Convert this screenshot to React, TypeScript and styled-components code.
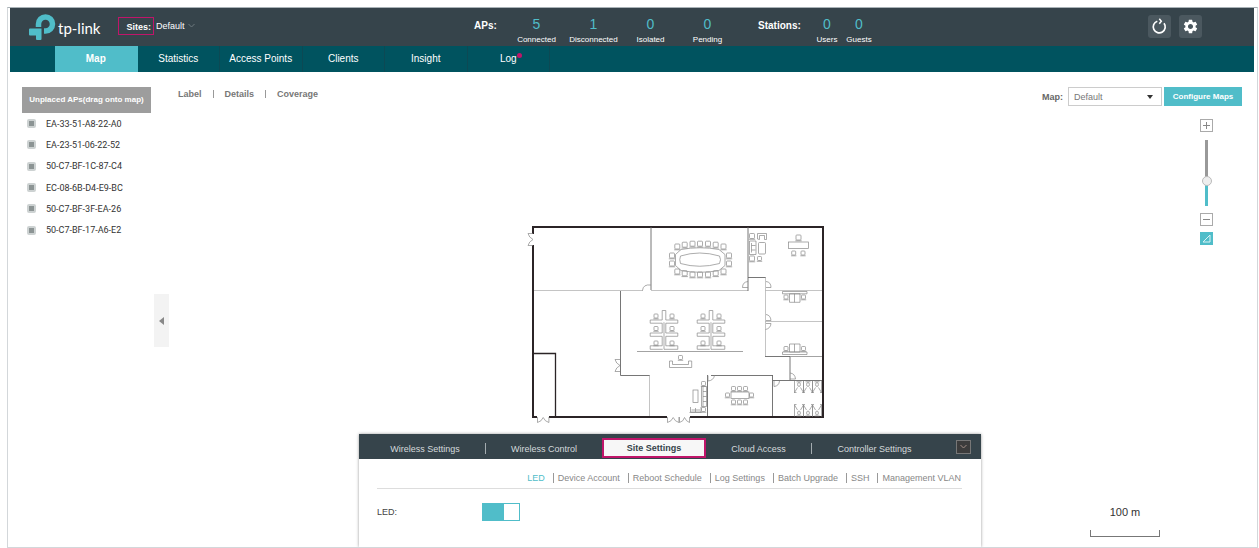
import React, { useState } from 'react';
import styled, { createGlobalStyle } from 'styled-components';
import { MdSettings } from 'react-icons/md';

const teal = '#50bdc9';
const slate = '#36444b';
const petrol = '#00535f';
const magenta = '#c0156a';

const GlobalStyle = createGlobalStyle`
  * { box-sizing: border-box; }
  body {
    margin: 0;
    background: #fff;
    color: #444;
    font-family: "Liberation Sans", Arial, sans-serif;
    font-size: 9px;
    line-height: 12px;
  }
  button, select, input { font: inherit; color: inherit; margin: 0; }
  button { padding: 0; border: 0; background: none; cursor: pointer; }
  a { color: inherit; text-decoration: none; }
  svg { display: block; }
`;

const Frame = styled.div`
  display: flex;
  flex-direction: column;
  min-height: calc(100vh - 7px);
  margin: 7px 1px 0 7px;
  padding: 0 3px 0 2px;
  border: 1px solid #d3d7da;
  border-top-color: #a9b2b7;
`;

/* Header */

const Header = styled.header`
  display: flex;
  height: 38px;
  background: ${slate};
  color: #fff;
`;

const Brand = styled.div`
  display: flex;
  align-items: center;
  flex: 0 0 464px;
  padding-left: 19px;
`;

const BrandName = styled.span`
  width: 60px;
  margin-left: 2px;
  padding-top: 2px;
  font-family: Lato, "Open Sans", sans-serif;
  font-size: 15px;
  line-height: 18px;
`;

const SitesLabel = styled.span`
  width: 36px;
  height: 18px;
  border: 1px solid ${magenta};
  padding-right: 2px;
  margin-bottom: 3px;
  font-weight: bold;
  line-height: 18px;
  text-align: right;
`;

const SiteButton = styled.button`
  display: flex;
  align-items: center;
  gap: 3px;
  margin: 0 0 3px 2px;
  line-height: 18px;
`;

const Stats = styled.dl`
  display: flex;
  flex: 1;
  margin: 0;
`;

const StatsTitle = styled.dt<{ $width: number }>`
  width: ${(p) => p.$width}px;
  padding-top: 12px;
  font-size: 10px;
  font-weight: bold;
`;

const Stat = styled.dd<{ $width: number }>`
  display: flex;
  flex-direction: column;
  align-items: center;
  width: ${(p) => p.$width}px;
  margin: 0;
  padding-top: 9px;
  font-size: 8px;
  line-height: 15px;
`;

const StatValue = styled.span`
  color: ${teal};
  font-size: 14px;
`;

const Gap = styled.div`
  width: 22px;
`;

const HeaderActions = styled.div`
  display: flex;
  gap: 8px;
  padding: 7px 52px 0 0;
`;

const HeaderButton = styled.button`
  display: grid;
  place-items: center;
  width: 23px;
  height: 23px;
  border-radius: 3px;
  background: #4b585f;
  color: #fff;
`;

/* Main navigation */

const Nav = styled.nav`
  display: flex;
  height: 26px;
  padding-left: 45px;
  background: ${petrol};
`;

const NavTabs = styled.div`
  display: grid;
  grid-template-columns: repeat(6, 1fr);
  width: 495px;
`;

const NavTab = styled.a<{ $active?: boolean }>`
  display: flex;
  justify-content: center;
  border-right: 1px solid ${(p) => (p.$active ? teal : '#0c4954')};
  background: ${(p) => (p.$active ? teal : 'transparent')};
  color: #fff;
  font-size: 10px;
  font-weight: ${(p) => (p.$active ? 'bold' : 'normal')};
  line-height: 26px;
`;

const Dot = styled.span`
  width: 5px;
  height: 5px;
  margin: 7px -5px 0 0;
  border-radius: 50%;
  background: ${magenta};
`;

/* Workspace */

const Workspace = styled.main`
  display: grid;
  grid-template-columns: 144px 15px minmax(0, 1fr) 73px;
  grid-template-rows: 34px minmax(0, 1fr);
  flex: 1;
`;

const Sidebar = styled.aside`
  grid-row: 1 / 3;
  padding: 15px 3px 0 12px;
`;

const SidebarTitle = styled.button`
  width: 100%;
  height: 26px;
  background: #9d9d9d;
  color: #fff;
  font-size: 8px;
  font-weight: bold;
  white-space: nowrap;
`;

const ApList = styled.ul`
  display: grid;
  grid-auto-rows: 1fr;
  height: 128px;
  margin: 0;
  padding: 0;
  list-style: none;
`;

const ApItem = styled.li`
  display: flex;
  align-items: center;
  gap: 10px;
  padding-left: 5px;
  color: #333;
  font-family: Roboto, sans-serif;
`;

const ApIcon = styled.span`
  width: 9px;
  height: 9px;
  border: 2px solid #cdd2d2;
  border-radius: 2px;
  background: #8c9494;
`;

const Collapse = styled.button`
  grid-row: 1 / 3;
  display: grid;
  place-items: center;
  height: 53px;
  margin-top: 222px;
  background: #f3f3f3;
`;

const Toolbar = styled.div`
  grid-column: 3 / 5;
  display: flex;
  align-items: flex-end;
  padding: 0 12px 0 9px;
`;

const ViewButton = styled.button`
  display: flex;
  align-items: center;
  height: 25px;
  color: #777;
  font-weight: bold;

  &:not(:first-child)::before {
    content: '';
    width: 1px;
    height: 8px;
    margin: 0 11px;
    background: #999;
  }
`;

const MapPicker = styled.label`
  display: flex;
  align-items: center;
  gap: 5px;
  margin-left: auto;
  color: #666;
  font-weight: bold;
`;

const SelectBox = styled.span`
  display: grid;
  grid-template-columns: 1fr 14px;
  align-items: center;
  width: 94px;
  height: 19px;
  border: 1px solid #ccc;
`;

const Select = styled.select`
  grid-area: 1 / 1 / 2 / 3;
  width: 100%;
  height: 17px;
  padding: 0 5px;
  border: 0;
  background: transparent;
  color: #777;
  font-weight: normal;
  appearance: none;
`;

const SelectArrow = styled.svg`
  grid-area: 1 / 2;
  pointer-events: none;
`;

const ConfigureButton = styled.button`
  width: 78px;
  height: 19px;
  margin-left: 2px;
  background: ${teal};
  color: #fff;
  font-size: 8px;
  font-weight: bold;
`;

const Stage = styled.section`
  display: flex;
  flex-direction: column;
  align-items: center;
  padding-top: 116px;
`;

const Plan = styled.svg`
  width: 304px;
  height: 204px;
  margin-left: 4px;
`;

const Rail = styled.div`
  display: flex;
  flex-direction: column;
  align-items: center;
  margin-right: 22px;
  padding-top: 13px;
`;

const RailButton = styled.button<{ $filled?: boolean }>`
  display: grid;
  place-items: center;
  width: 13px;
  height: 13px;
  margin-bottom: 6px;
  border: 1px solid ${(p) => (p.$filled ? teal : '#aaa')};
  background: ${(p) => (p.$filled ? teal : '#fff')};
`;

const ZoomSlider = styled.input`
  appearance: none;
  writing-mode: vertical-lr;
  direction: rtl;
  width: 10px;
  height: 66px;
  margin: 2px 0 7px;
  background: linear-gradient(to top, ${teal} 38%, #999 38%) center / 3px 100% no-repeat;

  &::-webkit-slider-runnable-track { width: 10px; background: transparent; }
  &::-webkit-slider-thumb {
    appearance: none;
    width: 10px;
    height: 10px;
    border: 1px solid #bbb;
    border-radius: 50%;
    background: #eee;
  }
`;

/* Settings drawer */

const Bottom = styled.div`
  display: grid;
  grid-template-columns: 1fr 622px 1fr;
  align-self: stretch;
  flex: 1;
  margin-top: 8px;
  padding-right: 10px;
`;

const Drawer = styled.section`
  grid-column: 2;
  min-height: 113px;
  background: #fff;
  box-shadow: 0 0 3px rgba(0, 0, 0, 0.4);
  clip-path: inset(-4px -4px 0 -4px);
`;

const DrawerTabs = styled.div`
  display: grid;
  grid-template-columns: 127px 116px 104px 106px 125px 1fr;
  height: 25px;
  background: ${slate};
  color: #d5dadc;
`;

const DrawerTab = styled.button<{ $divided?: boolean; $indent?: number }>`
  display: flex;
  align-items: center;
  justify-content: center;
  padding: 4px 0 0 ${(p) => p.$indent ?? 0}px;

  &::before, &::after {
    content: '';
    display: ${(p) => (p.$divided ? 'block' : 'none')};
  }
  &::before { margin-right: auto; }
  &::after {
    width: 1px;
    height: 11px;
    margin-left: auto;
    background: #a4acb0;
  }
`;

const ActiveDrawerTab = styled.button`
  height: 20px;
  margin-top: 4px;
  border: 2px solid ${magenta};
  background: #f7f7f7;
  color: #36444b;
  font-weight: bold;
`;

const DrawerToggle = styled.button`
  display: grid;
  place-items: center;
  align-self: center;
  justify-self: end;
  width: 15px;
  height: 14px;
  margin-right: 10px;
  border: 1px solid #777;
  background: #3c3c3c;
`;

const DrawerBody = styled.div`
  padding: 13px 19px 0 18px;
`;

const SubNav = styled.nav`
  display: flex;
  justify-content: flex-end;
  height: 17px;
  padding-right: 1px;
  border-bottom: 1px solid #ddd;
  color: #888;
`;

const SubLink = styled.a<{ $active?: boolean }>`
  display: flex;
  align-items: center;
  height: 12px;
  color: ${(p) => (p.$active ? teal : 'inherit')};

  &:not(:first-child)::before {
    content: '';
    width: 1px;
    height: 10px;
    margin: 0 4px 0 8px;
    background: #999;
  }
`;

const Field = styled.label`
  display: flex;
  align-items: center;
  height: 46px;
  color: #444;
`;

const FieldName = styled.span`
  width: 105px;
`;

const Toggle = styled.input`
  appearance: none;
  width: 38px;
  height: 18px;
  border: 1px solid ${teal};
  background: linear-gradient(to right, #fff 16px, #ddd 16px);

  &:checked { background: linear-gradient(to right, ${teal} 21px, #fff 21px); }
`;

const Scale = styled.div`
  align-self: start;
  justify-self: end;
  width: 70px;
  height: 35px;
  margin: 68px 11px 0 0;
  display: flex;
  flex-direction: column;
  justify-content: space-between;
  color: #333;
  font-size: 11px;
  line-height: 20px;
  text-align: center;
`;

const ScaleBar = styled.div`
  height: 7px;
  border: 1px solid #777;
  border-top: 0;
`;

const Chair = ({ x, y, s = 4 }: { x: number; y: number; s?: number }) => (
  <g>
    <rect x={x - s / 2} y={y - s / 2} width={s} height={s} rx={0.8} />
    <path d={`M${x - s / 2 - 0.7} ${y + s / 2 + 0.8}h${s + 1.4}`} />
  </g>
);

const Desks = ({ x }: { x: number }) => (
  <g>
    <path d={`M${x - 1.8} 320v-9.5h3.6v9.5h12v3.2h-12v9.8h12v3.3h-12v9.5h12v3.5h-13.8v-27h-0.1`} />
    <path d={`M${x - 1.8} 320h-12v3.2h12v9.8h-12v3.3h12v9.5h-12v3.5h12.5`} />
    {[316, 328.5, 343].map((y) => (
      <g key={y}>
        <Chair x={x - 8} y={y} />
        <Chair x={x + 8} y={y} />
      </g>
    ))}
  </g>
);

const Stall = ({ x, y, up }: { x: number; y: number; up?: boolean }) => (
  <g>
    <path d={`M${x} ${y}v11.5M${x + 9} ${y}v11.5`} />
    <path d={up ? `M${x} ${y}l3 5M${x + 9} ${y}l-3 5` : `M${x} ${y + 11.5}l3-5M${x + 9} ${y + 11.5}l-3-5`} />
    <ellipse cx={x + 4.5} cy={up ? y + 8 : y + 3.5} rx={1.4} ry={2} />
    <path d={up ? `M${x + 2} ${y + 11}h5` : `M${x + 2} ${y + 0.8}h5`} />
  </g>
);

const tableSeats: [number, number][] = [
  [677.3, 246.5], [684.7, 244.7], [692.5, 243.7], [700, 243.7], [708, 243.7], [715.7, 244.7], [723.5, 246.5],
  [677.3, 271.5], [684.7, 273.3], [692.5, 274.5], [700, 274.5], [708, 274.5], [715.7, 273.3], [723.5, 271.5],
  [672, 255.5], [672, 263.5], [729, 255.5], [729, 263.5],
];

const FloorPlan = () => (
  <Plan viewBox="525 222 304 204" fill="none" role="img" aria-label="Office floor plan">
    <g stroke="#2b2426" strokeWidth="2">
      <path d="M533 234v-7h290v190H690M667 417H549M537 417h-4V245" />
      <path d="M533 353.5h22.5V417" strokeWidth="1.3" />
    </g>
    <g stroke="#b5b5b5" strokeWidth="0.8">
      <path d="M534 290.5h109M651 290.5h97M765 290.5h57M765 321.5h57M765.5 277v79M649.5 375v41" />
    </g>
    <g stroke="#666" strokeWidth="0.9">
      <path d="M651 227v63M620.5 291v84.5h29M748 227v64M748 277.5h17.5M765 356.5h25M790 356v24M773 380.5h49M707.5 375v41M711 375.5h62M772.5 375v41" />
      <path d="M637 351.5h106M790 356.5h32" stroke="#999" />
    </g>
    <g stroke="#888" strokeWidth="0.7">
      <path d="M533 233.5h-5q1 4 5 6-4 2-5 6h5" />
      <path d="M537.5 417v5.500q4-1 5.700-5 1.700 4 5.700 5V417" />
      <path d="M667.500 417v5.500q4-1 5.700-5 1.700 4 5.700 5V417M679.500 417v5.500q4-1 5-5 1.700 4 5 5V417" />
      <path d="M620 359.500h-5q1 4 5 6-4 2-5 6h5" />
      <path d="M651 285q-8-1-8.500 5.500M748 281.500q-5.500.5-5.500 6h5.500M766 281.500q5 .5 5 6h-5M766 314.500q4.500.5 5 6h-5M766 323.500h5q-.5 5-5.500 6M708 375.500v5.500q5.500-.5 6.500-5.500M774 381v5.500q5-.5 5.500-5.500M790 373q5 .5 5.500 6h-5.500" />
      <path d="M681 249.500q19-3.500 38 0l6 5v11l-6 5q-19 3.500-38 0l-5.500-5v-11z" />
      <path d="M680.500 256q19-6 39 0 2 3.500 0 7.500-20 5.500-39 0-1.500-4 0-7.500z" />
      {tableSeats.map(([x, y]) => (
        <Chair key={`${x}-${y}`} x={x} y={y} s={5} />
      ))}
      <Desks x={664} />
      <Desks x={711} />
      <path d="M669.500 361h3v3.500h16V361h3.200v6.500h-22.200z" />
      <Chair x={680.500} y={357.500} />
      <rect x="788.500" y="242" width="20" height="6.500" />
      <Chair x={798.500} y={237.500} s={5} />
      <Chair x={793.700} y={253} />
      <Chair x={803} y={253} />
      <Chair x={752} y={236} s={5} />
      <path d="M757.500 239v-5.500h9v6h-2v-4h-5v4zM749.500 241h6.500v13.500h-6.500zM751.500 243v9.500M751.500 245.500h4M751.500 250h4" />
      <rect x="758.500" y="242.500" width="7" height="11.500" rx="1" />
      <Chair x={752} y={258.500} s={5} />
      <Chair x={759.500} y={258.500} />
      <path d="M782.500 291.500h24.500v2.300h-24.500zM789.500 293.800h10.500v8.500h-10.500zM794.500 293.800v8.500" />
      <Chair x={786} y={297} />
      <Chair x={803.500} y={297} />
      <path d="M782.500 352h24.500v2.500h-24.500zM789.500 344h10.500v8h-10.500zM794.500 344v8" />
      <Chair x={786} y={348.500} />
      <Chair x={803.500} y={348.500} />
      <rect x="731" y="392" width="18" height="6.500" />
      {[733.5, 739.5, 745.5].map((x) => (
        <g key={x}>
          <Chair x={x} y={388.500} />
          <Chair x={x} y={402} />
        </g>
      ))}
      <Chair x={727.500} y={395} />
      <Chair x={751.500} y={395} />
      <rect x="693" y="390" width="5" height="12.500" />
      <path d="M701.500 386.500h5v20h-5zM703 386.500v20M703 391.500h3.500M703 396.500h3.500M703 401.500h3.500M690.500 407v5h10.500v-5M691.500 410h8.500M695.500 408v4M689.500 412.500h12" />
      <Chair x={703.500} y={383.500} />
      <Chair x={703.500} y={409.500} />
      {[794.5, 803.5, 812.5].map((x) => (
        <g key={x}>
          <Stall x={x} y={381} />
          <Stall x={x} y={405} up />
        </g>
      ))}
      <path d="M794 392.500h2.500M802 392.500h3M811 392.500h3M820 392.500h2M794 404.500h2.500M802 404.500h3M811 404.500h3M820 404.500h2" />
    </g>
  </Plan>
);

const accessPoints = [
  'EA-33-51-A8-22-A0',
  'EA-23-51-06-22-52',
  '50-C7-BF-1C-87-C4',
  'EC-08-6B-D4-E9-BC',
  '50-C7-BF-3F-EA-26',
  '50-C7-BF-17-A6-E2',
];

const apStats: [string, number][] = [['Connected', 5], ['Disconnected', 1], ['Isolated', 0], ['Pending', 0]];
const stationStats: [string, number][] = [['Users', 0], ['Guests', 0]];
const navItems = ['Map', 'Statistics', 'Access Points', 'Clients', 'Insight', 'Log'];
const subItems = ['LED', 'Device Account', 'Reboot Schedule', 'Log Settings', 'Batch Upgrade', 'SSH', 'Management VLAN'];

export default function App() {
  const [led, setLed] = useState(true);

  return (
    <>
      <GlobalStyle />
      <Frame>
        <Header>
          <Brand>
            <svg width="27" height="27" viewBox="0 0 27 27" aria-hidden="true">
              <path d="M9.500 13V10a7 7 0 1 1 7 7h-1.500" fill="none" stroke={teal} strokeWidth="5.500" />
              <path d="M1 14.500h11.500V25a1 1 0 0 1-1 1H8a1 1 0 0 1-1-1v-3.500H1a1 1 0 0 1-1-1v-5a1 1 0 0 1 1-1z" fill={teal} />
            </svg>
            <BrandName>tp-link</BrandName>
            <SitesLabel>Sites:</SitesLabel>
            <SiteButton>
              Default
              <svg width="7" height="5" viewBox="0 0 7 5" fill="none" stroke="#6d787e" aria-hidden="true">
                <path d="M.5 1l3 3 3-3" />
              </svg>
            </SiteButton>
          </Brand>
          <Stats>
            <StatsTitle $width={34}>APs:</StatsTitle>
            {apStats.map(([label, value]) => (
              <Stat key={label} $width={57}>
                <StatValue>{value}</StatValue>
                {label}
              </Stat>
            ))}
            <Gap />
            <StatsTitle $width={53}>Stations:</StatsTitle>
            {stationStats.map(([label, value]) => (
              <Stat key={label} $width={32}>
                <StatValue>{value}</StatValue>
                {label}
              </Stat>
            ))}
          </Stats>
          <HeaderActions>
            <HeaderButton aria-label="Refresh">
              <svg width="17" height="17" viewBox="0 0 17 17" fill="none" stroke="#fff" strokeWidth="1.700">
                <path d="M13 5.200A6 6 0 1 1 6.300 3.200" />
                <path d="M8.300 .8l2 2.500-2 2.500" strokeWidth="1.500" />
              </svg>
            </HeaderButton>
            <HeaderButton aria-label="Settings">
              <MdSettings size={17} />
            </HeaderButton>
          </HeaderActions>
        </Header>

        <Nav>
          <NavTabs>
            {navItems.map((item) => (
              <NavTab key={item} href="#" $active={item === 'Map'}>
                {item}
                {item === 'Log' && <Dot />}
              </NavTab>
            ))}
          </NavTabs>
        </Nav>

        <Workspace>
          <Sidebar>
            <SidebarTitle>Unplaced APs(drag onto map)</SidebarTitle>
            <ApList>
              {accessPoints.map((ap) => (
                <ApItem key={ap}>
                  <ApIcon />
                  {ap}
                </ApItem>
              ))}
            </ApList>
          </Sidebar>
          <Collapse aria-label="Collapse list">
            <svg width="5" height="8" viewBox="0 0 5 8" fill="#888">
              <path d="M5 0v8L0 4z" />
            </svg>
          </Collapse>
          <Toolbar>
            <ViewButton>Label</ViewButton>
            <ViewButton>Details</ViewButton>
            <ViewButton>Coverage</ViewButton>
            <MapPicker>
              Map:
              <SelectBox>
                <Select defaultValue="Default">
                  <option>Default</option>
                </Select>
                <SelectArrow width="6" height="4" viewBox="0 0 6 4" fill="#333" aria-hidden="true">
                  <path d="M0 0h6L3 4z" />
                </SelectArrow>
              </SelectBox>
            </MapPicker>
            <ConfigureButton>Configure Maps</ConfigureButton>
          </Toolbar>

          <Stage>
            <FloorPlan />
            <Bottom>
              <Drawer>
                <DrawerTabs>
                  <DrawerTab $divided $indent={6}>Wireless Settings</DrawerTab>
                  <DrawerTab>Wireless Control</DrawerTab>
                  <ActiveDrawerTab>Site Settings</ActiveDrawerTab>
                  <DrawerTab $divided>Cloud Access</DrawerTab>
                  <DrawerTab>Controller Settings</DrawerTab>
                  <DrawerToggle aria-label="Close settings">
                    <svg width="7" height="5" viewBox="0 0 7 5" fill="none" stroke="#a08c84">
                      <path d="M.5 1l3 3 3-3" />
                    </svg>
                  </DrawerToggle>
                </DrawerTabs>
                <DrawerBody>
                  <SubNav>
                    {subItems.map((item) => (
                      <SubLink key={item} href="#" $active={item === 'LED'}>
                        {item}
                      </SubLink>
                    ))}
                  </SubNav>
                  <Field>
                    <FieldName>LED:</FieldName>
                    <Toggle type="checkbox" checked={led} onChange={(e) => setLed(e.target.checked)} />
                  </Field>
                </DrawerBody>
              </Drawer>
              <Scale>
                100 m
                <ScaleBar />
              </Scale>
            </Bottom>
          </Stage>

          <Rail>
            <RailButton aria-label="Zoom in">
              <svg width="7" height="7" viewBox="0 0 7 7" stroke="#888">
                <path d="M0 3.500h7M3.500 0v7" />
              </svg>
            </RailButton>
            <ZoomSlider type="range" min={0} max={100} defaultValue={36} aria-label="Zoom" />
            <RailButton aria-label="Zoom out">
              <svg width="7" height="7" viewBox="0 0 7 7" stroke="#888">
                <path d="M0 3.500h7" />
              </svg>
            </RailButton>
            <RailButton $filled aria-label="Set scale">
              <svg width="9" height="9" viewBox="0 0 9 9" fill="none" stroke="#d9f2f5">
                <path d="M1 8L8 1v7z" />
              </svg>
            </RailButton>
          </Rail>
        </Workspace>
      </Frame>
    </>
  );
}
